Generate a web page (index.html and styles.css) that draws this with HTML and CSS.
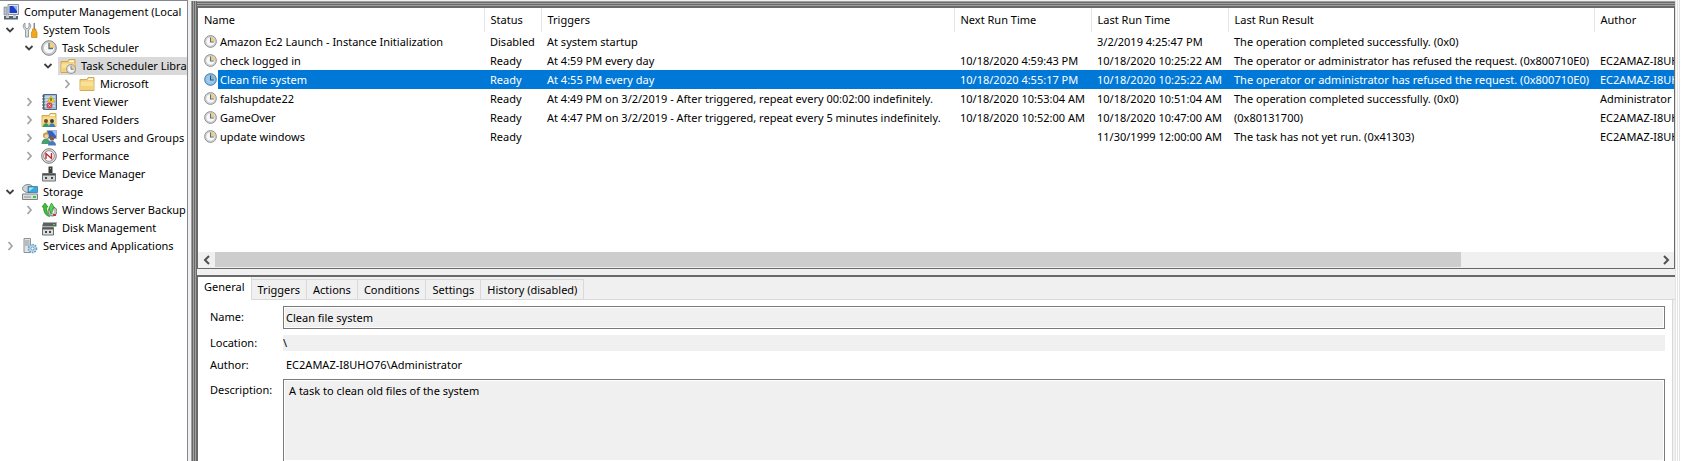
FILE: index.html
```
<!DOCTYPE html>
<html lang="en">
<head>
<meta charset="utf-8">
<title>Computer Management</title>
<link rel="stylesheet" href="styles.css">
</head>
<body>
<svg class="defs" aria-hidden="true">
  <symbol id="open" viewBox="0 0 10 10"><path d="M1.5 3 5 6.5 8.500 3" fill="none" stroke="#404040" stroke-width="1.8"/></symbol>
  <symbol id="closed" viewBox="0 0 10 10"><path d="M3.500 1 7 5 3.500 9" fill="none" stroke="#a6a6a6" stroke-width="1.800"/></symbol>
  <symbol id="clock" viewBox="0 0 16 16"><circle cx="8" cy="8" r="7.300" fill="#d0d2d3" stroke="#858585"/><circle cx="8" cy="8" r="5.600" fill="#f7f8f8" stroke="#b5b9bc" stroke-width=".6"/><path d="M8 8V2.600A5.400 5.400 0 0 1 13.400 8Z" fill="#f5cd75"/><path d="M8 3v5.500h4" fill="none" stroke="#556f88" stroke-width="1.300"/></symbol>
  <symbol id="clocksel" viewBox="0 0 16 16"><circle cx="8" cy="8" r="7.300" fill="#7fb0d8" stroke="#4b7da6"/><circle cx="8" cy="8" r="5.600" fill="#9cc9ec"/><path d="M8 8V2.600A5.400 5.400 0 0 1 13.400 8Z" fill="#8fb6bd"/><path d="M8 3v5.500h4" fill="none" stroke="#1d5688" stroke-width="1.300"/></symbol>
  <symbol id="folder" viewBox="0 0 16 16"><path d="M1 14.500V3.500h7l1-2h6v13z" fill="#f2cf73" stroke="#c79c3d" stroke-width=".8"/><path d="M9.500 2.500h4.500v1.500H9z" fill="#fffbe9"/><path d="M1.500 5.500h13V14h-13z" fill="#f9e09a"/><path d="M1.500 10h13v4h-13z" fill="#f4d27c"/></symbol>
  <symbol id="computer" viewBox="0 0 16 16"><path d="M5 .5h10.500v10H5z" fill="#dfe3e8" stroke="#8a93a0"/><path d="M6.500 2h7.500v7H6.500z" fill="#1d3fc4"/><path d="m10 2 4 0v5z" fill="#8fb4ff"/><path d="M1 3h3v8H1z" fill="#b9c1ca" stroke="#7c8794" stroke-width=".7"/><path d="M1 12h14v3.500H1z" fill="#59636f"/><path d="M3 11h3v3H3zM10 11h3v3h-3z" fill="#c3cbd3"/></symbol>
  <symbol id="tools" viewBox="0 0 16 16"><path d="M3 1v4l2 2 2-2V1c2 1 2.500 4 .500 6L6.500 8v7h-3V8L2.500 7C.5 5 1 2 3 1z" fill="#d8dcde" stroke="#81888c" stroke-width=".8"/><path d="M11.500 1h1.500v6h-1.500z" fill="#888"/><path d="M10.500 7h3.500v2l1 1v5.500h-5.500V10l1-1z" fill="#f3a81c" stroke="#b8780c" stroke-width=".6"/></symbol>
  <symbol id="events" viewBox="0 0 16 16"><path d="M2.500.5h13v15h-13z" fill="#9db9d8" stroke="#4c6687"/><path d="M4 3h10M4 6h10M4 9h10M4 12h10" stroke="#e8f0f8"/><path d="M1 2h3M1 5h3M1 8h3M1 11h3M1 14h3" stroke="#555"/><path d="m10 2 4 6H6.500z" fill="#ffe02e" stroke="#b69300" stroke-width=".6"/><path d="M10 4v3" stroke="#222"/><circle cx="8.500" cy="11.500" r="3" fill="#d8464e"/><path d="m7.500 10.500 2 2m0-2-2 2" stroke="#fff" stroke-width=".8"/></symbol>
  <symbol id="people" viewBox="0 0 16 16"><circle cx="5" cy="9" r="2" fill="#7b4a20"/><circle cx="11" cy="9" r="2" fill="#3d3d3d"/><path d="M2 15c0-5 6-5 6 0z" fill="#2f9c69"/><path d="M8 15c0-5 6-5 6 0z" fill="#3a7fc2"/></symbol>
  <symbol id="users" viewBox="0 0 16 16"><path d="M6 .5h9.500v8H6z" fill="#2f61c9" stroke="#a8b2bf"/><path d="m11 1 4 0v5z" fill="#9cc2ff"/><circle cx="5" cy="5.500" r="3" fill="#c99a3d"/><circle cx="5.500" cy="6.300" r="2" fill="#f3cfa2"/><path d="M.5 14c0-7 9-7 9 0z" fill="#48a06d"/><circle cx="11" cy="8.500" r="2.300" fill="#8a5b34"/><path d="M7 15.500c0-6 8-6 8 0z" fill="#4a77bd"/></symbol>
  <symbol id="perf" viewBox="0 0 16 16"><circle cx="8" cy="8" r="7.300" fill="#e4e4e4" stroke="#777"/><circle cx="8" cy="8" r="5.300" fill="#fff" stroke="#777" stroke-width=".8"/><path d="M5 11V5.500l5.500 5V5" fill="none" stroke="#c3262e" stroke-width="1.400"/></symbol>
  <symbol id="device" viewBox="0 0 16 16"><path d="M7.500.5h4v7h-4z" fill="#3c3c3c"/><path d="M9 2h1v1H9z" fill="#4ee04e"/><path d="M1.500 7.500h13v7.500h-13z" fill="#d4d6d7" stroke="#6d7072"/><path d="M2 8h12v1.500H2z" fill="#4d5052"/><path d="M4 11h2v2H4zM10 11h2v2h-2z" fill="#444"/></symbol>
  <symbol id="storage" viewBox="0 0 16 16"><ellipse cx="6" cy="4.500" rx="5.500" ry="4" fill="#cfd4d6" stroke="#858c8f"/><path d="M6 2.500h9.500v6H6z" fill="#39a8dc" stroke="#2c6f95" stroke-width=".7"/><path d="m7 3.500 5 0-5 4z" fill="#a9e1f8"/><path d="M.5 10h15v5.500H.5z" fill="#dcdedf" stroke="#7d8183"/><path d="M11 12h3v2h-3z" fill="#42c23c"/><path d="M2 13h7" stroke="#8b8f90"/></symbol>
  <symbol id="backup" viewBox="0 0 16 16"><circle cx="11.500" cy="9.500" r="4.500" fill="#bfc3c5" stroke="#777"/><circle cx="11.500" cy="9.500" r="1.500" fill="#fff"/><path d="M1 5l3-4 3 4H5.500c0 5 1 7 3.500 9.500C5 14 2.500 11 2.500 5z" fill="#39c234" stroke="#187a16" stroke-width=".6"/><path d="M8 6l2.500-5 3 5h-1.500c-.5 4-1 5-2 6z" fill="#54d34a" stroke="#187a16" stroke-width=".6"/><path d="M12 13h3" stroke="#bd3f37" stroke-width="2"/></symbol>
  <symbol id="disk" viewBox="0 0 16 16"><path d="M2.500 2h13v4.500H1z" fill="#5d6062"/><path d="M2.500 2h13v1H2z" fill="#a9adae"/><path d="M12 4h2v1h-2z" fill="#52dc52"/><path d="M1.500 7.500h11v7.500h-11z" fill="#dcddde" stroke="#6b6e70"/><path d="M2 8h10v1.500H2z" fill="#55585a"/><path d="M4 11h2v2H4zM8 11h2v2H8z" fill="#444"/></symbol>
  <symbol id="services" viewBox="0 0 16 16"><path d="M2 .5h6.500v14H2z" fill="#dfe3e5" stroke="#8c9498"/><path d="M3 3h4.500M3 5h4.500M3 7h4.500" stroke="#8c9498"/><circle cx="10.500" cy="10.500" r="4" fill="#bcd9ee" stroke="#6e9dc0" stroke-width="1.600" stroke-dasharray="1.600 1"/><circle cx="10.500" cy="10.500" r="1.500" fill="#fff" stroke="#5384a8" stroke-width=".7"/></symbol>
</svg>
<div class="app">
  <nav class="tree" aria-label="Console tree">
    <ul>
      <li class="node root"><svg class="icon"><use href="#computer"/></svg><span>Computer Management (Local</span></li>
      <li class="node l1"><svg class="chev"><use href="#open"/></svg><svg class="icon"><use href="#tools"/></svg><span>System Tools</span></li>
      <li class="node l2"><svg class="chev"><use href="#open"/></svg><svg class="icon"><use href="#clock"/></svg><span>Task Scheduler</span></li>
      <li class="node l3 current"><svg class="chev"><use href="#open"/></svg><svg class="icon"><use href="#folder"/><use href="#clock" x="6" y="6" width="10" height="10"/></svg><span>Task Scheduler Library</span></li>
      <li class="node l4"><svg class="chev"><use href="#closed"/></svg><svg class="icon"><use href="#folder"/></svg><span>Microsoft</span></li>
      <li class="node l2"><svg class="chev"><use href="#closed"/></svg><svg class="icon"><use href="#events"/></svg><span>Event Viewer</span></li>
      <li class="node l2"><svg class="chev"><use href="#closed"/></svg><svg class="icon"><use href="#folder"/><use href="#people"/></svg><span>Shared Folders</span></li>
      <li class="node l2"><svg class="chev"><use href="#closed"/></svg><svg class="icon"><use href="#users"/></svg><span>Local Users and Groups</span></li>
      <li class="node l2"><svg class="chev"><use href="#closed"/></svg><svg class="icon"><use href="#perf"/></svg><span>Performance</span></li>
      <li class="node l2"><svg class="chev"></svg><svg class="icon"><use href="#device"/></svg><span>Device Manager</span></li>
      <li class="node l1"><svg class="chev"><use href="#open"/></svg><svg class="icon"><use href="#storage"/></svg><span>Storage</span></li>
      <li class="node l2"><svg class="chev"><use href="#closed"/></svg><svg class="icon"><use href="#backup"/></svg><span>Windows Server Backup</span></li>
      <li class="node l2"><svg class="chev"></svg><svg class="icon"><use href="#disk"/></svg><span>Disk Management</span></li>
      <li class="node l1"><svg class="chev"><use href="#closed"/></svg><svg class="icon"><use href="#services"/></svg><span>Services and Applications</span></li>
    </ul>
  </nav>
  <main class="content">
    <section class="list">
      <div class="viewport">
        <table>
          <colgroup><col class="c-name"><col class="c-status"><col class="c-trig"><col class="c-next"><col class="c-last"><col class="c-result"><col></colgroup>
          <thead><tr><th>Name</th><th>Status</th><th>Triggers</th><th>Next Run Time</th><th>Last Run Time</th><th>Last Run Result</th><th>Author</th></tr></thead>
          <tbody>
            <tr><td><div class="task"><svg><use href="#clock"/></svg><span>Amazon Ec2 Launch - Instance Initialization</span></div></td><td>Disabled</td><td>At system startup</td><td></td><td>3/2/2019 4:25:47 PM</td><td>The operation completed successfully. (0x0)</td><td></td></tr>
            <tr><td><div class="task"><svg><use href="#clock"/></svg><span>check logged in</span></div></td><td>Ready</td><td>At 4:59 PM every day</td><td>10/18/2020 4:59:43 PM</td><td>10/18/2020 10:25:22 AM</td><td>The operator or administrator has refused the request. (0x800710E0)</td><td>EC2AMAZ-I8UHO76</td></tr>
            <tr class="selected"><td><div class="task"><svg><use href="#clocksel"/></svg><span>Clean file system</span></div></td><td>Ready</td><td>At 4:55 PM every day</td><td>10/18/2020 4:55:17 PM</td><td>10/18/2020 10:25:22 AM</td><td>The operator or administrator has refused the request. (0x800710E0)</td><td>EC2AMAZ-I8UHO76</td></tr>
            <tr><td><div class="task"><svg><use href="#clock"/></svg><span>falshupdate22</span></div></td><td>Ready</td><td>At 4:49 PM on 3/2/2019 - After triggered, repeat every 00:02:00 indefinitely.</td><td>10/18/2020 10:53:04 AM</td><td>10/18/2020 10:51:04 AM</td><td>The operation completed successfully. (0x0)</td><td>Administrator</td></tr>
            <tr><td><div class="task"><svg><use href="#clock"/></svg><span>GameOver</span></div></td><td>Ready</td><td>At 4:47 PM on 3/2/2019 - After triggered, repeat every 5 minutes indefinitely.</td><td>10/18/2020 10:52:00 AM</td><td>10/18/2020 10:47:00 AM</td><td>(0x80131700)</td><td>EC2AMAZ-I8UHO76</td></tr>
            <tr><td><div class="task"><svg><use href="#clock"/></svg><span>update windows</span></div></td><td>Ready</td><td></td><td></td><td>11/30/1999 12:00:00 AM</td><td>The task has not yet run. (0x41303)</td><td>EC2AMAZ-I8UHO76</td></tr>
          </tbody>
        </table>
      </div>
      <div class="hscroll">
        <button type="button" aria-label="Scroll left"><svg viewBox="0 0 10 10"><path d="M7 1 3 5l4 4" fill="none" stroke="#505050" stroke-width="2"/></svg></button>
        <div class="track"><div class="thumb"></div></div>
        <button type="button" aria-label="Scroll right"><svg viewBox="0 0 10 10"><path d="m3 1 4 4-4 4" fill="none" stroke="#505050" stroke-width="2"/></svg></button>
      </div>
    </section>
    <section class="details">
      <div class="tabs" role="tablist">
        <button type="button" role="tab" aria-selected="true">General</button><button type="button" role="tab">Triggers</button><button type="button" role="tab">Actions</button><button type="button" role="tab">Conditions</button><button type="button" role="tab">Settings</button><button type="button" role="tab">History (disabled)</button>
      </div>
      <form class="panel">
        <label for="name">Name:</label><input id="name" class="boxed" readonly value="Clean file system">
        <label for="location">Location:</label><input id="location" class="plain" readonly value="\">
        <span>Author:</span><output class="author">EC2AMAZ-I8UHO76\Administrator</output>
        <label for="desc" class="desc-label">Description:</label><textarea id="desc" class="boxed" readonly>A task to clean old files of the system</textarea>
      </form>
    </section>
  </main>
  <div class="edge"></div>
</div>
</body>
</html>
```
FILE: styles.css
```
* { box-sizing: border-box; }
body, button, input, textarea {
  font-family: "Noto Sans", "Open Sans", sans-serif;
  font-size: 11px;
  line-height: 18px;
  color: #000;
}
body { margin: 0; background: #f0f0f0; }
.defs { position: absolute; width: 0; height: 0; }
.app { display: flex; height: 100vh; overflow: hidden; }

.tree {
  flex: 0 0 188px;
  overflow: hidden;
  background: #fff;
  border-top: 1px solid #828790;
  border-right: 1px solid #828790;
}
.tree ul { list-style: none; margin: 0; padding: 2px 0 0; }
.node { display: flex; align-items: center; height: 18px; white-space: nowrap; }
.node span { padding-left: 5px; }
.chev { width: 10px; height: 10px; margin-right: 7px; flex: none; }
.icon { width: 16px; height: 16px; flex: none; }
.root { padding-left: 3px; }
.l1 { padding-left: 5px; }
.l2 { padding-left: 24px; }
.l3 { padding-left: 43px; }
.l4 { padding-left: 62px; }
.current { background: linear-gradient(#d9d9d9, #d9d9d9) 58px 0 no-repeat; }

.content {
  flex: 1;
  min-width: 0;
  display: flex;
  flex-direction: column;
  margin: 1px 0 0 3px;
  padding: 6px 0 0 6px;
  background:
    repeating-linear-gradient(90deg, #a0a0a0 0 1px, #696969 1px 2px) 0 0 / 6px 100% no-repeat,
    repeating-linear-gradient(#a0a0a0 0 1px, #696969 1px 2px) 0 0 / 100% 6px no-repeat;
}
.list {
  display: flex;
  flex-direction: column;
  flex: 0 0 262px;
  background: #fff;
  border: 1px solid #696969;
}
.viewport { flex: 1; overflow: hidden; }
table { width: 100%; table-layout: fixed; border-collapse: collapse; }
th, td { padding: 0 0 0 6px; height: 19px; text-align: left; font-weight: 400; white-space: nowrap; overflow: hidden; }
th { height: 24px; border-right: 1px solid #e5e5e5; }
th:last-child { border-right: 0; }
.c-name { width: 286px; }
.c-status { width: 57px; }
.c-trig { width: 413px; }
.c-next { width: 137px; }
.c-last { width: 137px; }
.c-result { width: 366px; }
.task { display: flex; align-items: center; }
.task svg { width: 13px; height: 13px; margin-right: 3px; }
.selected td { background: #0078d7; color: #fff; }
.selected td:first-child { background: linear-gradient(#0078d7, #0078d7) 20px 0 no-repeat; }
.hscroll { display: flex; height: 16px; background: #f0f0f0; }
.hscroll button { width: 17px; padding: 0; border: 0; background: none; display: grid; place-items: center; }
.hscroll svg { width: 10px; height: 10px; }
.track { flex: 1; }
.thumb { width: 86.4%; height: 15px; background: #cdcdcd; }

.details {
  flex: 1;
  min-height: 0;
  display: flex;
  flex-direction: column;
  margin-top: 6px;
  border: solid #696969;
  border-width: 2px 0 0 1px;
}
.tabs { display: flex; align-items: flex-end; height: 23px; }
.tabs button { height: 21px; padding: 0 6px; border: solid #d9d9d9; border-width: 1px 1px 1px 0; background: #f0f0f0; }
.tabs button[aria-selected=true] { height: 23px; padding: 0 6px 4px; background: #fff; border-width: 0 1px 0 0; }
.tabs::after { content: ""; flex: 1; border-bottom: 1px solid #d9d9d9; }
.panel {
  flex: 1;
  min-height: 0;
  margin-right: 2px;
  padding: 5px 7px 0 12px;
  display: grid;
  grid-template-columns: 73px 1fr;
  grid-template-rows: 24px 16px 16px 1fr;
  row-gap: 6px;
  align-items: center;
  background: #fff;
  border-right: 1px solid #d9d9d9;
}
.boxed { width: 100%; height: 23px; margin: 0; padding: 0 2px; background: #f0f0f0; border: 1px solid #7a7a7a; box-shadow: inset 0 0 0 1px #fff; outline: 0; }
.plain { width: 100%; height: 16px; padding: 0; border: 0; background: #f0f0f0; }
.author { padding-left: 3px; }
.desc-label { align-self: start; padding-top: 2px; }
textarea.boxed { height: 100%; padding: 2px 5px; border-bottom: 0; resize: none; }
.edge { flex: 0 0 6px; background: repeating-linear-gradient(90deg, #e3e3e3 0 1px, #fff 1px 2px); }
```
